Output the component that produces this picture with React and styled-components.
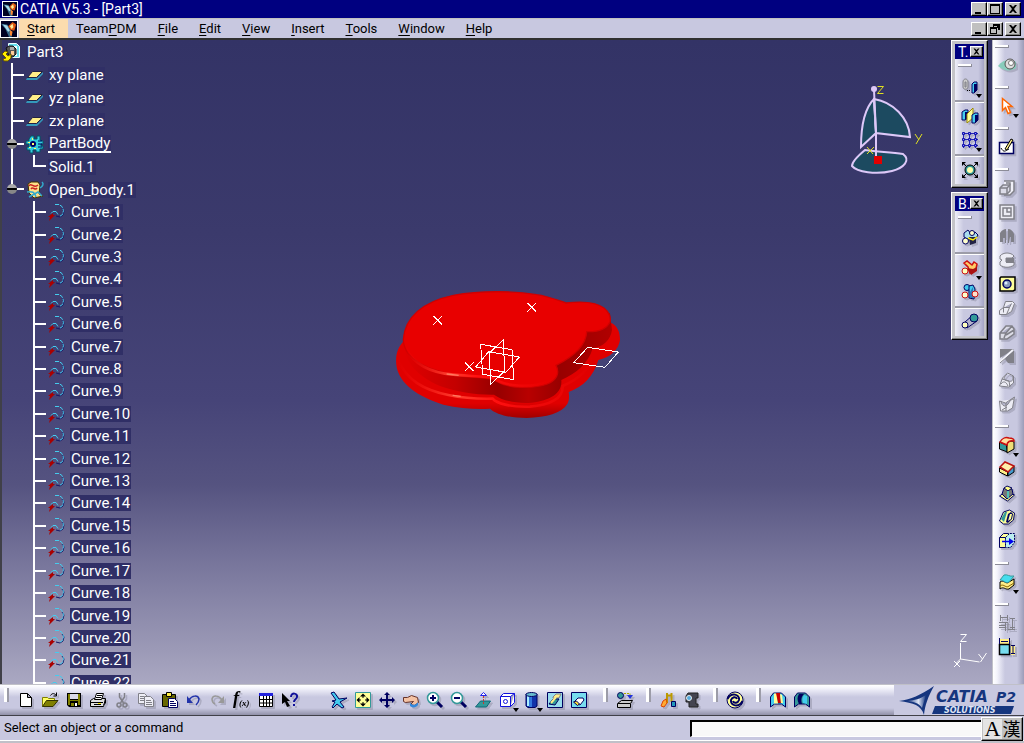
import React from "react";
import styled, { createGlobalStyle, css } from "styled-components";

const NAVY = "#000060";
const YELLOW = "#ffee88";
const CYAN = "#44ccee";
const TEAL = "#339999";
const GREY = "#808088";

// 18x18 toolbar drawings
const icons = {
  new: <path d="M3.5 2.5h7l4 4v9h-11zM10.5 2.5v4h4" fill="#fff" stroke="#000" />,
  open: (
    <>
      <path d="M1.5 15.5v-9h5l1 1h6v2" fill="#ffff66" stroke="#808000" />
      <path d="M1.5 15.5l4-6h11.5l-5 6z" fill="#808000" stroke="#333300" />
      <path d="M9.5 4.5c2-3 4-2 6 0M15.5 1.5v3.5h-3" fill="none" stroke="#000" />
    </>
  ),
  save: (
    <>
      <path d="M2 2h14v14H4l-2-2z" fill="#000" />
      <path d="M3 3h2v11H3zM13 3h2v11h-2zM5 9h8v1H5z" fill="#808000" />
      <path d="M5 3h8v5H5z" fill="#d8d8e8" />
      <path d="M6 12h3v3H6z" fill="#808000" />
      <path d="M10 12h2v3h-2z" fill="#fff" />
    </>
  ),
  print: (
    <>
      <path d="M1.5 9.5l3-2h12l-2 8h-13z" fill="#e0e0e0" stroke="#000" />
      <path d="M5.5 8.5l2-6h7l-2 6z" fill="#fff" stroke="#000" />
      <path d="M8 4.5h5M7 6.5h5M2 11.5h12M5 13.5h7M16.5 8v4l-2 2" stroke="#000" fill="none" />
      <path d="M9 12h3v1H9z" fill="#ffee00" />
    </>
  ),
  cut: (
    <>
      <path d="M6.5 2v4l4 6M11.5 2v4l-4 6" fill="none" stroke={GREY} strokeWidth="1.5" />
      <circle cx="6" cy="14" r="2" fill="none" stroke={GREY} strokeWidth="1.5" />
      <circle cx="12" cy="14" r="2" fill="none" stroke={GREY} strokeWidth="1.5" />
    </>
  ),
  copy: (
    <g fill="#eeeef6" stroke={GREY}>
      <path d="M1.5 2.5h6l3 3v7h-9z" />
      <path d="M3 5.5h4M3 7.5h4M3 9.5h4" />
      <path d="M7.5 5.5h6l3 3v7h-9z" />
      <path d="M9 9.5h5M9 11.5h6M9 13.5h6" />
    </g>
  ),
  paste: (
    <>
      <path d="M1.5 3.5h13v12h-13z" fill="#666600" stroke="#000" />
      <path d="M5.5 1.5h5v4h-5z" fill="#ffee44" stroke="#000" />
      <path d="M7.5 7.5h6l3 3v6h-9z" fill="#fff" stroke={NAVY} />
      <path d="M9 10.5h4M9 12.5h6M9 14.5h6" stroke={NAVY} />
    </>
  ),
  undo: (
    <>
      <path d="M4 9c3-5 9-5 10-1 0 3-2 5-3 6" fill="none" stroke="#2233aa" strokeWidth="1.5" />
      <path d="M2 5v7h6z" fill="#2233aa" />
    </>
  ),
  redo: (
    <>
      <path d="M13 9c-3-5-9-5-10-1 0 3 1 4 3 5" fill="none" stroke="#999" strokeWidth="1.5" />
      <path d="M15 5v7H9z" fill="#999" />
    </>
  ),
  formula: (
    <text x="0" y="13" fontFamily="Liberation Serif, serif" fontStyle="italic" fontWeight="bold" fontSize="18">
      f<tspan fontSize="9" dy="2">(x)</tspan>
    </text>
  ),
  table: (
    <>
      <path d="M2.5 2.5h13v13h-13zM2 8.5h13M2 12h13M6.5 5v10M9.5 5v10M12.5 5v10" fill="#fff" stroke="#000" />
      <path d="M2 2h14v3H2z" fill="#2222dd" />
    </>
  ),
  whatsThis: (
    <>
      <path d="M1 2l8 8H6l3 5-3 1-2-5-3 2z" fill="#000" />
      <path d="M10 6c0-5 7-4 6 0 0 2-3 2-3 5M13 13v2" fill="none" stroke="#111199" strokeWidth="2" />
    </>
  ),
  fly: (
    <path d="M1 2l3-1 5 7 8-1-7 4 4 5-2 1-5-4-4 4-1-1 3-5-3-1 4-1z" fill={CYAN} stroke={NAVY} />
  ),
  fit: (
    <>
      <path d="M1.5 1.5h15v15h-15z" fill="#ffff99" stroke={TEAL} />
      <path d="M9 2.5l3 3H6zM9 15.5l3-3H6zM2.5 9l3-3v6zM15.5 9l-3-3v6z" fill="#000" />
      <path d="M9 5v2M9 11v2M5 9h2M11 9h2" stroke="#000" />
    </>
  ),
  pan: (
    <>
      <path d="M9 3v12M3 9h12" stroke={NAVY} strokeWidth="2" />
      <path d="M9 1l3 3H6zM9 17l3-3H6zM1 9l3-3v6zM17 9l-3-3v6z" fill={NAVY} />
    </>
  ),
  rotate: (
    <>
      <path d="M1.5 6.5h4l4-2 6 2 1 5-4 3-4-1 3-3-8 1-2-1z" fill="#f4c2a4" stroke="#66332a" />
      <path d="M8 12c3 3 6 2 8-1v3c-2 3-6 3-8 1z" fill="#3388dd" />
    </>
  ),
  zoomIn: (
    <>
      <path d="M11 11l5 5" stroke={NAVY} strokeWidth="3" />
      <circle cx="7" cy="7" r="5.5" fill="#fff" stroke={TEAL} strokeWidth="1.5" />
      <path d="M4 7h6M7 4v6" stroke={NAVY} strokeWidth="2" />
    </>
  ),
  zoomOut: (
    <>
      <path d="M11 11l5 5" stroke={NAVY} strokeWidth="3" />
      <circle cx="7" cy="7" r="5.5" fill="#fff" stroke={TEAL} strokeWidth="1.5" />
      <path d="M4 7h6" stroke={NAVY} strokeWidth="2" />
    </>
  ),
  normal: (
    <>
      <path d="M1.5 16l5-6h10l-4 6z" fill={TEAL} stroke="#116677" />
      <path d="M9.5 5v8" stroke="#cc3333" strokeDasharray="2 1" />
      <path d="M9.5 1.5l3 3h-6z" fill="#fff" stroke="#2222ee" />
    </>
  ),
  iso: (
    <g fill="#fff" stroke="#1111dd">
      <path d="M2.5 5.5h10v10h-10zM2.5 5.5l3-3h11l-4 3M16.5 2.5v9l-4 4" />
      <circle cx="7.5" cy="10.5" r="2" />
    </g>
  ),
  shading: (
    <>
      <path d="M4 3h11v12l-2 1.5H6L4 15z" fill="#1133aa" stroke={NAVY} />
      <path d="M5 4h2v11H5z" fill="#aaeeff" />
      <path d="M7 4h3v12H7z" fill="#3377dd" />
      <ellipse cx="9.5" cy="3.5" rx="5.5" ry="2" fill="#66bbcc" stroke={NAVY} />
    </>
  ),
  hide: (
    <>
      <path d="M1.5 1.5h15v15h-15z" fill="#99ddee" stroke={NAVY} />
      <path d="M7 6l3-3h5l-2 4H7z" fill={YELLOW} stroke={GREY} />
      <path d="M3 13l4-5h6l-4 6z" fill={TEAL} stroke={NAVY} />
      <path d="M5 12l5-6" stroke={YELLOW} strokeWidth="2" />
    </>
  ),
  swap: (
    <>
      <path d="M1.5 1.5h15v15h-15z" fill="#77ddee" stroke={NAVY} />
      <path d="M4 11l4-4h5l1 2-4 5z" fill="#fff" stroke={NAVY} />
      <path d="M3.5 11l3-1 3 3-2 1.5z" fill="#ffdd33" stroke={NAVY} />
    </>
  ),
  material: (
    <>
      <circle cx="4.5" cy="4.5" r="3" fill={TEAL} stroke={NAVY} />
      <path d="M8 2.5h6v3" fill="none" stroke="#aaaa00" strokeDasharray="2 1" />
      <path d="M11 4h6l-3 4z" fill="#2233dd" />
      <path d="M1.5 12.5l4-3h11l-2 3v4h-13zM2 12.5h12" fill="#ccc" stroke="#000" />
    </>
  ),
  measure: (
    <>
      <path d="M8 2v10M8 4.5h4M12.5 2v9" stroke="#bb9900" strokeWidth="2" />
      <path d="M2 15l2-5 3-2 1 4-3 4z" fill="#ffaa33" stroke="#dd4400" />
      <path d="M12.5 10.5h4v5h-4z" fill="#2299bb" stroke={NAVY} />
    </>
  ),
  camera: (
    <>
      <path d="M5 2h10v5h-2v6h2v3H6v-5H3V5z" fill="#444450" stroke="#222" />
      <circle cx="6" cy="7" r="2.5" fill="#55aadd" stroke="#eee" />
    </>
  ),
  update: (
    <>
      <circle cx="9" cy="9" r="8" fill="#ffff99" stroke={NAVY} />
      <path d="M1.500 8C5 1 14 3 13 9c-1 3-5 4-6 1" fill="none" stroke={NAVY} strokeWidth="2" />
      <path d="M16.500 10C13 17 4 15 5 9c1-3 5-4 6-1" fill="none" stroke={NAVY} strokeWidth="2" />
    </>
  ),
  draftAnalysis: (
    <>
      <path d="M1.5 6l3-4h8l4 4v10l-4-3h-7l-4 3z" fill={CYAN} stroke={NAVY} />
      <path d="M5 2.500h3l1 10H5z" fill="#ffff99" />
      <path d="M7 2h4l1 10H9z" fill="#cc0000" />
      <path d="M11 3l2 1 1 8h-2z" fill="#ffff99" />
    </>
  ),
  curvature: (
    <>
      <path d="M1.5 6l3-4h8l4 4v10l-4-3h-7l-4 3z" fill={TEAL} stroke={NAVY} />
      <path d="M6 3h5c-3 3-3 6-2 10H6C4 9 4 6 6 3z" fill={NAVY} />
      <path d="M11 4l3 1v8l-4-1c-1-3-1-5 1-8z" fill={CYAN} />
    </>
  ),
  eye: (
    <>
      <path d="M0 10c5-7 13-8 18-4v6c-6 4-12 3-18-2z" fill="#88ccbb" />
      <circle cx="12" cy="8" r="5" fill="#ddd" stroke="#555" />
      <circle cx="13" cy="7" r="2.5" fill="#fff" stroke="#777" />
    </>
  ),
  select: <path d="M4.5 1.5v12l3-3 2.5 6 2.5-1-2.5-6h4z" fill="#fff" stroke="#ff6600" strokeWidth="1.5" />,
  sketch: (
    <>
      <path d="M1.5 4.5h14v11h-14z" fill="#fff" stroke={NAVY} strokeWidth="1.5" />
      <path d="M3 10c3 5 4 3 8 1" stroke="#000" fill="none" />
      <path d="M7 11l6-10 2 1-6 10z" fill={YELLOW} stroke="#000" />
    </>
  ),
  pad: (
    <g stroke={GREY} strokeWidth="1.5">
      <path d="M6 2h10v10l-4 4H6" fill="#f0f0f8" />
      <path d="M2 9l3-3h7v6l-3 3H2z" fill="#dcdce8" />
      <path d="M2 9h7v6M9 9l3-3M12 6V4H8" fill="none" />
    </g>
  ),
  pocket: <path d="M2 2h14v14H2zM5 5h8v8H5zM9 5v4h4" fill="#ececf4" stroke={GREY} strokeWidth="1.5" />,
  shaft: <path d="M8 2v14H7v-5H5v4H2V6c2-3 4-4 6-4zM10 2c3 0 5 2 6 5v8h-3v-5h-1l-1 6h-1z" fill={GREY} />,
  groove: (
    <>
      <path d="M2 5c3-4 11-4 14 0l-2 2H8v4h8v3c-4 3-10 3-14 0v-3l2-2-2-1z" fill="#ececf4" stroke={GREY} />
      <path d="M8 7h8v5H8z" fill={GREY} />
    </>
  ),
  hole: (
    <>
      <path d="M2 3l1-1h14v13l-2 1H2z" fill="#ffff99" stroke="#000" strokeWidth="1.5" />
      <circle cx="9" cy="9" r="4" fill="#8899bb" stroke={NAVY} strokeWidth="1.5" />
      <circle cx="8" cy="8" r="1.5" fill="#ddeeff" />
    </>
  ),
  rib: <path d="M1.5 11.5l4-3 2-6h7l2 2-3 8-5 3h-7zM5.5 8.500h6l2-4M5.5 8.500v5M11.5 8.500l-3 7" fill="#ececf4" stroke={GREY} />,
  slot: <path d="M2 10l6-7h6l2 3v5l-7 5H2zM2 10h6l6-7M8 10l-2 5M8 12l8-5" fill="#dcdce6" stroke={GREY} strokeWidth="1.5" />,
  stiffener: (
    <>
      <path d="M2 2h14L2 11z" fill={GREY} />
      <path d="M16 3v13h-6l-3-4z" fill={GREY} />
      <path d="M2 15L15 3" stroke="#f4f4fa" strokeWidth="2" />
      <path d="M2 16L16 4" stroke={GREY} />
    </>
  ),
  loft: <path d="M1.5 15l3-8 5-5 6 3v7l-5 4zM4 8l7 2 1 6M9 3c-4 4-4 6 1 7s5-1 5-5M3 13c2-3 5-3 7 2" fill="#ececf4" stroke={GREY} />,
  loftRemove: <path d="M1.5 6l6 2 9-6-2 11-5 3h-7zM3 6c1 6 5 6 7 3s3-5 6-5M8 8v8M4 15l5-3" fill="#ececf4" stroke={GREY} />,
  fillet: (
    <>
      <path d="M1.5 6l7 3 1 7-8-3z" fill={TEAL} stroke="#000" />
      <path d="M9 10c0-4 3-6 7-4v7l-7 4z" fill="#eedd77" stroke="#000" />
      <path d="M2 6c2-4 6-5 9-4 3 0 5 1 5 3-4-1-7 1-7 4z" fill="#ffe0a0" stroke="#cc1111" strokeWidth="1.5" />
    </>
  ),
  chamfer: (
    <>
      <path d="M1.5 8l8 4v4l-8-4z" fill={YELLOW} stroke="#000" />
      <path d="M10 12l6-6v6l-6 4z" fill="#4499cc" stroke="#000" />
      <path d="M2 7l5-5 9 4-6 6z" fill="#ffeeaa" stroke="#bb1111" strokeWidth="1.5" />
    </>
  ),
  draft: (
    <>
      <path d="M1.5 12l7-5 8 4-7 6z" fill="#ffff88" stroke={NAVY} />
      <path d="M4 10l2-6 8 1 1 5-6 5z" fill="#777" stroke={NAVY} />
      <path d="M6 4l3-2 5 2-4 3z" fill="#ffff88" stroke={NAVY} />
      <path d="M10 7v7" stroke="#44ddcc" strokeWidth="1.5" />
    </>
  ),
  shell: (
    <>
      <path d="M1.5 13l4-9 6-2 5 3-1 7-5 4h-5z" fill="#ffff99" stroke={NAVY} />
      <path d="M3 11l4-7h2L6 14z" fill={TEAL} />
      <path d="M8 14l2-8 3-2 2 2-1 5-4 4z" fill={NAVY} />
      <path d="M10 13l2-7h2l-1 5z" fill="#ffff99" />
    </>
  ),
  thickness: (
    <>
      <path d="M1.5 5.5h6v10h-6zM1.5 5.5l4-4h5v4" fill="#ffff99" stroke={NAVY} />
      <path d="M7.5 5.5l4-4h5v9l-4 5h-5z" fill="#bbeeee" stroke={NAVY} strokeDasharray="2 1" />
      <path d="M4 9.5h8" stroke="#0000ee" strokeWidth="1.5" />
      <path d="M11 6l5 3.5-5 3.5z" fill="#0000ee" />
    </>
  ),
  surface: (
    <>
      <path d="M2 9c4-3 6 3 9 0l5-3v6l-5 4c-4 1-5-3-9 0z" fill={YELLOW} stroke="#000" />
      <path d="M2 13c4-3 6 3 9 0l5-3" fill="none" stroke="#886600" />
      <path d="M2 7l4-5c4-1 5 2 10 1l-5 6c-4 2-5-2-9-2z" fill="#44ddee" stroke={TEAL} />
    </>
  ),
  constraintOff: <path d="M2.5 1v6M9.5 1v6M2 3.5h7M1 8.5h9v8M1 11.5h6M1 13.5h6M7.5 9v8M10 15.5h7M14.5 5v10M12 4.5h5M12 13.5h5" fill="none" stroke={GREY} />,
  constraint: (
    <>
      <path d="M1 1h11v5H1zM13 7h4v10h-4z" fill={YELLOW} />
      <path d="M1.5 6.5h10v10h-10z" fill="#77ddee" stroke="#000" strokeWidth="1.5" />
      <path d="M1.5 0v6M11.5 0v6M3 3.5h7M13 7.5h4M13 15.5h4M15 8v7" stroke={NAVY} />
    </>
  ),
  translate: (
    <>
      <path d="M2 5c0-4 5-4 5 0v5c0 3-5 3-5 0zM4 5h1v5H4z" fill="#ccc" stroke={GREY} />
      <path d="M11 7l2-2h3v8l-3 3h-2z" fill={CYAN} stroke={NAVY} />
      <path d="M13 7h3v6l-3 3z" fill={NAVY} />
      <path d="M6 13.5h4" stroke="#000" strokeDasharray="1 1" />
    </>
  ),
  symmetry: (
    <>
      <path d="M1 5l3-2h3v8l-3 2H1z" fill={CYAN} stroke={NAVY} />
      <path d="M4 5h3v6l-3 2z" fill={NAVY} />
      <path d="M6 16V7l6-6v10z" fill="#ffff99" stroke="#998800" />
      <path d="M11 8l3-2h3v7l-3 3h-3z" fill={CYAN} stroke={NAVY} />
      <path d="M14 8h3v5l-3 3z" fill={NAVY} />
    </>
  ),
  pattern: (
    <>
      <path d="M1 2.5h16M1 8.5h16M1 14.5h16M2.5 1v16M8.5 1v16M14.5 1v16" stroke="#2222bb" />
      <path d="M1.5 1.5h2v2h-2zM7.5 1.5h2v2h-2zM13.5 1.5h2v2h-2zM1.5 7.5h2v2h-2zM7.5 7.5h2v2h-2zM13.5 7.5h2v2h-2zM1.5 13.5h2v2h-2zM7.5 13.5h2v2h-2zM13.5 13.5h2v2h-2z" fill="#88f" stroke="#1111aa" />
    </>
  ),
  scaling: (
    <>
      <path d="M2 2l4 4M16 2l-4 4M2 16l4-4M16 16l-4-4" stroke="#000" />
      <path d="M1 1h4L1 5zM17 1h-4l4 4zM1 17h4l-4-4zM17 17h-4l4-4z" fill="#000" />
      <circle cx="9" cy="9" r="5" fill={TEAL} stroke="#000" />
      <circle cx="9" cy="9" r="3" fill="#ffffaa" />
    </>
  ),
  assemble: (
    <>
      <path d="M3 4l4-3 3 4 4-2 3 3-2 3-7 2-5-3z" fill="#aaddee" stroke={NAVY} />
      <circle cx="11" cy="4" r="2.500" fill="#ffffcc" stroke={NAVY} />
      <path d="M8 8h7v6l-6 2z" fill="#222244" />
      <path d="M7 9l5 2 4-3" stroke="#ffee00" strokeWidth="1.5" fill="none" />
      <circle cx="4.500" cy="12" r="3" fill="#ffffcc" stroke={NAVY} />
    </>
  ),
  add: (
    <>
      <path d="M3 4l3-2 5 4 2-3 3 2-1 5-6 4-2-6z" fill="#ffcc66" stroke="#cc1111" strokeWidth="1.5" />
      <path d="M6 9l6 1 4-2v4l-6 4z" fill="#aa1111" />
      <circle cx="4" cy="12" r="3" fill="#ffffbb" stroke="#cc1111" />
    </>
  ),
  remove: (
    <>
      <circle cx="6" cy="4.5" r="3" fill={CYAN} stroke={NAVY} />
      <path d="M8 3l4-1 2 4-1 10-5-1z" fill={CYAN} stroke={NAVY} />
      <path d="M9 9l3-5v11H9z" fill="#3377bb" />
      <circle cx="4" cy="12" r="3" fill="#ffffcc" stroke="#cc1111" />
      <circle cx="14" cy="11" r="3" fill="#ffe0cc" stroke="#cc1111" />
    </>
  ),
  trim: (
    <>
      <path d="M4 9l8-7 4 6-10 7z" fill="#b4b4cc" stroke={NAVY} />
      <circle cx="13" cy="5" r="4" fill={TEAL} stroke={NAVY} />
      <circle cx="4" cy="12" r="3" fill="#ffffbb" stroke={NAVY} />
    </>
  ),
  plane: (
    <>
      <path d="M0 14l1-2h10l6-6v2l-6 6z" fill="#3399bb" />
      <path d="M1.5 11.5l5-6h10l-6 6z" fill={YELLOW} stroke="#222244" />
    </>
  ),
  body: (
    <>
      <path d="M5 1h3v3h3V1h3v4l3 1v3h-2v2h2v3h-3v3h-4v-2H7v3H4v-3H1v-3h2V9H0V6h3V4z" fill="#33ccdd" stroke="#005566" />
      <circle cx="7" cy="9" r="3" fill={NAVY} />
      <path d="M6 3h1v2H6zM2 7h2v1H2zM6 8h2v2H6zM3 12h2v1H3zM8 13h2v1H8z" fill="#ffff66" />
      <path d="M12 6h4M12 9h4M12 12h4" stroke={NAVY} />
    </>
  ),
  openBody: (
    <>
      <path d="M2 3l3-2h7l2 3-1 9 4 2-9 2-5-5z" fill="#ffe08a" stroke="#443300" />
      <path d="M3 5c2-4 5 3 9-1M5 8c2-3 4 2 6-1" fill="none" stroke="#cc2222" strokeWidth="1.5" />
      <path d="M1 11c5-1 8 0 9 5M3 16l9-5 4 4M16 1c2 2 1 4-2 6" fill="none" stroke="#33aacc" strokeWidth="1.5" />
    </>
  ),
  curve: (
    <>
      <path d="M14 5l2 3-1 4-3 2-4-1" fill="none" stroke="#181866" />
      <path d="M7 1.5h4l3 2 1.5 4-1 4-3 2" fill="none" stroke={CYAN} strokeDasharray="4 1" />
      <path d="M3 10.5l2-2h3l2 3" fill="none" stroke={CYAN} />
      <path d="M0 14l5-4v2h2l-2 2-4 4 1-4z" fill="#aa0000" />
    </>
  ),
  part: (
    <>
      <path d="M6.5 0.5h8l3 3v11h-7l-4-7z" fill="#66ddee" stroke="#eeffff" />
      <path d="M9 3h6v10h-4z" fill="#eeffff" />
      <path d="M4 5l3-2h4l3 3v5l-3 3-4-1z" fill="#555" stroke="#111" />
      <path d="M8 4h4v3H8z" fill="#aaa" />
      <path d="M9 8h3v4H9z" fill="#ffcc99" />
      <path d="M0 11l3-3 3 1-2 2 2 2 3-2v4l-3 3H2l-1-2 3-1z" fill="#ffee00" stroke="#665500" />
    </>
  ),
  app: (
    <>
      <path d="M0 0h18v18H0z" fill="#000022" />
      <path d="M0 3l7 1 5 8v6H9L5 9z" fill="#336688" />
      <path d="M2 4l5 1 3 6-2 1z" fill="#aaddee" />
      <path d="M8 6l5-5 4 3-2 7-4-1z" fill="#dd5511" />
      <path d="M10 6l3-3 1 4-2 2z" fill="#ffee99" />
      <path d="M10 10l3 2-1 5-2-1z" fill="#ff8833" />
    </>
  ),
};

const Icon = ({ name, size = 18 }) => (
  <svg width={size} height={size} viewBox="0 0 18 18" aria-hidden="true">
    {icons[name]}
  </svg>
);

const menus = [
  ["", "S", "tart"],
  ["Team", "P", "DM"],
  ["", "F", "ile"],
  ["", "E", "dit"],
  ["", "V", "iew"],
  ["", "I", "nsert"],
  ["", "T", "ools"],
  ["", "W", "indow"],
  ["", "H", "elp"],
];

const curves = Array.from({ length: 22 }, (_, i) => `Curve.${i + 1}`);

const bottomTools = [
  { gap: 14 },
  ..."new open save print cut copy paste undo redo formula table whatsThis".split(" ").map((icon) => ({ icon })),
  { gap: 25, plain: true },
  ..."fly fit pan rotate zoomIn zoomOut normal".split(" ").map((icon) => ({ icon })),
  { icon: "iso", drop: true },
  { icon: "shading", drop: true },
  { icon: "hide" },
  { icon: "swap" },
  { gap: 22 },
  { icon: "material" },
  { gap: 19 },
  { icon: "measure" },
  { icon: "camera" },
  { gap: 19 },
  { icon: "update" },
  { gap: 19 },
  { icon: "draftAnalysis" },
  { icon: "curvature" },
];

const sideGroups = [
  [{ icon: "eye" }],
  [{ icon: "select", drop: true }],
  [{ icon: "sketch" }],
  "pad pocket shaft groove hole rib slot stiffener loft loftRemove".split(" ").map((icon) => ({ icon })),
  [
    { icon: "fillet", drop: true },
    { icon: "chamfer" },
    { icon: "draft" },
    { icon: "shell" },
    { icon: "thickness" },
  ],
  [{ icon: "surface", drop: true }],
  [{ icon: "constraintOff" }, { icon: "constraint" }],
];

const palettes = [
  {
    title: "T.",
    groups: [
      [{ icon: "translate", drop: true }],
      [{ icon: "symmetry" }, { icon: "pattern", drop: true }],
      [{ icon: "scaling" }],
    ],
  },
  {
    title: "B.",
    groups: [
      [{ icon: "assemble" }],
      [{ icon: "add", drop: true }, { icon: "remove" }],
      [{ icon: "trim" }],
    ],
  },
];

const Tool = ({ icon, drop }) => (
  <ToolButton type="button" aria-label={icon} $drop={drop}>
    <Icon name={icon} />
  </ToolButton>
);

const glyphs = {
  minimize: <path d="M2 9h6v2H2z" />,
  maximize: <path d="M1 1h10v10H1zM2 3v7h8V3z" fillRule="evenodd" />,
  restore: <path d="M4 1h7v6H9V5H8V3H5v1H4zM1 4h7v7H1zM2 6v4h5V6z" fillRule="evenodd" />,
  close: <path d="M2 2h2l2 2 2-2h2L7 6l3 4H8L6 8l-2 2H2l3-4z" />,
};

const Glyph = ({ name, size = 12 }) => (
  <svg width={size} height={size} viewBox="0 0 12 12" aria-hidden="true">
    {glyphs[name]}
  </svg>
);

const WindowControls = ({ middle }) => (
  <Controls>
    <ControlButton type="button" aria-label="Minimize"><Glyph name="minimize" /></ControlButton>
    <ControlButton type="button" aria-label={middle}><Glyph name={middle} /></ControlButton>
    <ControlButton type="button" aria-label="Close" $apart><Glyph name="close" /></ControlButton>
  </Controls>
);

const Model = () => (
  <ModelSvg viewBox="0 0 780 450" role="img" aria-label="Solid part">
    <defs>
      <linearGradient id="flange" x1="0" y1="0" x2="0" y2="1">
        <stop offset="0.4" stopColor="#e00000" />
        <stop offset="0.85" stopColor="#e00000" />
        <stop offset="1" stopColor="#a00000" />
      </linearGradient>
      <linearGradient id="wall" x1="0" y1="0" x2="1" y2="0">
        <stop offset="0" stopColor="#e00000" />
        <stop offset="0.25" stopColor="#c40000" />
        <stop offset="0.45" stopColor="#960000" />
        <stop offset="0.6" stopColor="#b80000" />
        <stop offset="0.75" stopColor="#980000" />
        <stop offset="1" stopColor="#b00000" />
      </linearGradient>
      <linearGradient id="shine" x1="0" y1="0" x2="1" y2="0">
        <stop offset="0" stopColor="#ff1010" stopOpacity="0" />
        <stop offset="0.3" stopColor="#ff4030" />
        <stop offset="0.5" stopColor="#ff1010" />
        <stop offset="1" stopColor="#ff1010" stopOpacity="0" />
      </linearGradient>
    </defs>
    <path d="M72 182C50 205 45 230 50 262C60 310 110 350 190 374C240 386 290 388 330 386C350 404 390 414 440 414C500 412 545 400 562 372C568 360 568 350 566 336C610 320 640 290 655 240C690 232 716 210 720 180C720 155 712 140 696 130L600 120Z" fill="url(#flange)" />
    <path d="M54 240C80 300 130 330 205 345C250 354 300 357 338 356C350 370 390 382 450 380C510 376 550 355 548 318C590 300 630 270 640 225" fill="none" stroke="url(#shine)" strokeWidth="8" />
    <path d="M70 180C70 240 105 285 180 318C230 336 290 345 342 344C365 360 400 370 445 369C500 365 548 345 544 300C590 280 625 250 638 205C670 200 692 180 696 150L690 100Z" fill="url(#wall)" />
    <path d="M70 178C75 110 130 65 220 46C300 32 400 32 470 44C505 49 530 60 558 69C600 64 645 64 672 84C686 95 693 112 690 125C680 148 655 156 620 155C618 200 570 235 528 256C540 280 530 300 502 312C465 326 390 328 350 304C335 294 320 294 300 293C210 290 120 265 84 220C74 206 70 195 70 178Z" fill="#e80000" stroke="#d00000" strokeWidth="4" />
    <path d="M78 205C100 250 150 278 220 284C260 288 300 287 340 294C370 318 450 328 505 304" fill="none" stroke="url(#shine)" strokeWidth="8" />
    <path d="M200 282l36 4M218 346l24 3" stroke="#ff7a60" strokeWidth="4" />
    <g fill="none" stroke="#fff" strokeWidth="3" shapeRendering="crispEdges">
      <path d="M160 108l26 26M186 108l-26 26M442 69l26 26M468 69l-26 26M255 247l26 26M281 247l-26 26" />
      <path d="M302 193l94 16 5 90-93-16z" />
      <path d="M371 179l2 95-41 39-4-94z" />
      <path d="M326 215l92 16-40 46-91-16z" />
      <path d="M623 202l92 14-40 46-94-14z" />
    </g>
  </ModelSvg>
);

const Compass = () => (
  <CompassSvg viewBox="0 0 76 96" role="img" aria-label="Compass">
    <g fill="#1c4a60" stroke="#ddc8f8" strokeWidth="2">
      <path d="M25 14C15 24 12 42 12 62L27 48Z" />
      <path d="M25 14C44 17 60 33 61 52L27 48Z" />
      <path d="M16 65C30 67 42 67 54 69C62 75 55 83 43 86C27 90 8 87 3 81C3 76 10 70 16 65Z" />
      <path d="M25 5L27 48V72" />
    </g>
    <circle cx="25" cy="4" r="3" fill="#ddc8f8" />
    <path d="M25 71h8v8h-8z" fill="#e00000" />
    <path d="M28.5 1.5h6l-6 7h6M66 49l4 6M73 49l-6 10M18 62l6 7M25 62l-7 7" fill="none" stroke="#e0e020" />
  </CompassSvg>
);

const Axis = () => (
  <AxisSvg viewBox="0 0 36 36" aria-hidden="true">
    <path d="M8.5 1.5h6l-6 7h6M8.5 10v16l-4 4M8.5 26l19 3M26.5 21l4 5M34.5 20l-6 9M2 28l6 6M8 28l-6 6" fill="none" stroke="#fff" />
  </AxisSvg>
);

const App = () => {
  return (
    <Window>
      <GlobalStyle />
      <TitleBar>
        <AppMark><Icon name="app" size={14} /></AppMark>
        <Title>CATIA V5.3 - [Part3]</Title>
        <WindowControls middle="maximize" />
      </TitleBar>
      <MenuBar>
        <AppMark><Icon name="app" size={16} /></AppMark>
        {menus.map(([before, key, after], i) => (
          <MenuItem type="button" key={before + key + after} $active={i === 0}>
            {before}<u>{key}</u>{after}
          </MenuItem>
        ))}
        <WindowControls middle="restore" />
      </MenuBar>

      <Body>
        <Viewport>
          <Tree>
            <RootNode>
              <Icon name="part" />
              <Label>Part3</Label>
            </RootNode>
            {["xy plane", "yz plane", "zx plane"].map((name) => (
              <Node key={name}>
                <Branch />
                <Icon name="plane" />
                <Label>{name}</Label>
              </Node>
            ))}
            <Node>
              <Branch><Knob /></Branch>
              <Icon name="body" />
              <Label $active>PartBody</Label>
            </Node>
            <Node>
              <Trunk />
              <Branch $nested $last />
              <Label $close>Solid.1</Label>
            </Node>
            <Node>
              <Branch $last><Knob $last /></Branch>
              <Icon name="openBody" />
              <Label>Open_body.1</Label>
            </Node>
            <Curves>
              {curves.map((name) => (
                <Curve key={name}>
                  <Branch />
                  <Icon name="curve" />
                  <Label>{name}</Label>
                </Curve>
              ))}
            </Curves>
          </Tree>
          <Model />
          <Compass />
          <Axis />
          <Palettes>
            {palettes.map(({ title, groups }) => (
              <Palette key={title}>
                <PaletteTitle>
                  {title}
                  <PaletteClose type="button" aria-label="Close"><Glyph name="close" size={9} /></PaletteClose>
                </PaletteTitle>
                <PaletteBody>
                  <Dash />
                  {groups.map((group, i) => (
                    <PaletteGroup key={i}>
                      {group.map((tool) => <Tool key={tool.icon} {...tool} />)}
                    </PaletteGroup>
                  ))}
                </PaletteBody>
              </Palette>
            ))}
          </Palettes>
        </Viewport>
        <SideBar>
          {sideGroups.map((group, i) => (
            <SideGroup key={i}>
              <Dash />
              {group.map((tool) => <Tool key={tool.icon} {...tool} />)}
            </SideGroup>
          ))}
        </SideBar>
      </Body>

      <BottomBar>
        {bottomTools.map((tool, i) =>
          tool.icon ? <Tool key={i} {...tool} /> : <Grip key={i} $width={tool.gap} $plain={tool.plain} />
        )}
        <Logo viewBox="0 0 130 30" role="img" aria-label="CATIA P2 Solutions">
          <defs>
            <linearGradient id="star" x1="0" y1="0" x2="1" y2="0">
              <stop offset="0" stopColor="#15357e" />
              <stop offset="0.6" stopColor="#dfe6f6" />
              <stop offset="1" stopColor="#15357e" />
            </linearGradient>
          </defs>
          <path d="M5 16C18 14 25 11 40 1C34 12 31 20 30 30C27 20 20 18 5 16Z" fill="#15357e" />
          <path d="M13 16C21 15 26 14 32 10L28 23C25 18 20 17 13 16Z" fill="url(#star)" />
          <path d="M41 21h79l-3 8H38z" fill="#15357e" />
          <g fontFamily="DejaVu Sans, sans-serif" fontStyle="italic" fontWeight="bold">
            <text x="42" y="17" fontSize="16" fill="#15357e">CATIA</text>
            <text x="102" y="17" fontSize="14" fill="#15357e">P2</text>
            <text x="50" y="28" fontSize="8" fill="#dfe4f4">SOLUTIONS</text>
          </g>
        </Logo>
      </BottomBar>

      <StatusBar>
        <Message>Select an object or a command</Message>
        <CommandInput type="text" aria-label="Command" />
        <ImeBox>
          <ImeLatin>A</ImeLatin>
          <ImeHanja>漢</ImeHanja>
        </ImeBox>
      </StatusBar>
    </Window>
  );
};

export default App;

// Styled Components
const GlobalStyle = createGlobalStyle`
  * {
    box-sizing: border-box;
  }

  body {
    margin: 0;
    overflow: hidden;
    font-family: Roboto, "Liberation Sans", sans-serif;
    font-size: 14px;
  }

  button {
    font: inherit;
    border: none;
    padding: 0;
    background: none;
    color: inherit;
  }

  svg {
    display: block;
    flex: none;
    overflow: visible;
  }
`;

const raised = css`
  border: 1px solid;
  border-color: #fff #000 #000 #fff;
  box-shadow: inset -1px -1px 0 #808080;
`;

const Window = styled.div`
  display: flex;
  flex-direction: column;
  height: 100vh;
  background: #c8c8e0;
`;

const TitleBar = styled.header`
  display: flex;
  align-items: center;
  height: 18px;
  padding: 0 3px 0 2px;
  background: #000080;
  color: #fff;
`;

const Title = styled.span`
  padding-left: 2px;
  line-height: 16px;
`;

const AppMark = styled.span`
  display: block;
  border: 1px solid #fff;
`;

const Controls = styled.div`
  display: flex;
  margin-left: auto;
`;

const ControlButton = styled.button`
  ${raised}
  display: flex;
  align-items: center;
  justify-content: center;
  width: 16px;
  height: 14px;
  margin-left: ${({ $apart }) => ($apart ? 2 : 0)}px;
  background: #c0c0c0;
`;

const MenuBar = styled.nav`
  display: flex;
  align-items: center;
  height: 22px;
  padding-right: 3px;
  border-top: 1px solid #c0c0c0;
  border-bottom: 2px solid #303030;
  background: #c8c8e0;
  font-size: 13px;

  ${AppMark} {
    margin-right: 1px;
  }
`;

const MenuItem = styled.button`
  height: 19px;
  padding: 0 13px 0 8px;
  line-height: 19px;
  background: ${({ $active }) => ($active ? "#fbdcae" : "none")};

  u {
    text-underline-offset: 2px;
  }
`;

const Body = styled.main`
  display: flex;
  flex: 1;
  min-height: 0;
`;

const Viewport = styled.section`
  position: relative;
  flex: 1;
  overflow: hidden;
  border-left: 2px solid #404048;
  background: linear-gradient(
    #333366 0%,
    #3b3a6c 30%,
    #464478 56%,
    #555380 69%,
    #77759b 81%,
    #9795b3 93%,
    #aaa8c2 100%
  );
`;

const Tree = styled.ul`
  margin: 0;
  padding: 0;
  list-style: none;
  color: #fff;
  font-size: 15px;
`;

const Node = styled.li`
  display: flex;
  align-items: center;
  height: 23px;
  padding-left: 9px;
`;

const RootNode = styled(Node)`
  padding-left: 0;

  span {
    margin-left: 6px;
  }
`;

const Label = styled.span`
  margin-left: ${({ $close }) => ($close ? 0 : 4)}px;
  padding: 0 1px;
  line-height: 16px;
  background: #302f66;
  border-bottom: ${({ $active }) => ($active ? "2px solid #fff" : "none")};
`;

const Branch = styled.span`
  position: relative;
  display: flex;
  align-items: ${({ $last }) => ($last ? "flex-end" : "center")};
  align-self: ${({ $last }) => ($last ? "flex-start" : "stretch")};
  height: ${({ $last }) => ($last ? "12px" : "auto")};
  width: 13px;
  margin-left: ${({ $nested }) => ($nested ? 20 : 0)}px;
  margin-right: 2px;
  border-left: 2px solid #fff;

  &::before {
    content: "";
    width: 100%;
    height: 2px;
    background: #fff;
  }
`;

const Trunk = styled.span`
  align-self: stretch;
  width: 2px;
  background: #fff;
`;

const Knob = styled.span`
  position: absolute;
  left: -6px;
  width: 10px;
  height: 10px;
  margin-bottom: ${({ $last }) => ($last ? -4 : 0)}px;
  border-radius: 50%;
  background: linear-gradient(#aaa 4px, #000 4px, #000 6px, #888 6px);
`;

const Curves = styled.ul`
  display: flex;
  flex-direction: column;
  height: 493px;
  margin: 0;
  padding: 0 0 0 31px;
  list-style: none;
`;

const Curve = styled.li`
  display: flex;
  flex: 1;
  min-height: 0;
  align-items: center;
`;

const ModelSvg = styled.svg`
  position: absolute;
  left: calc(50% - 117px);
  top: calc(50% - 82px);
  width: 260px;
`;

const CompassSvg = styled.svg`
  position: absolute;
  right: 67px;
  top: 45px;
  width: 76px;
`;

const AxisSvg = styled.svg`
  position: absolute;
  right: 4px;
  bottom: 15px;
  width: 36px;
`;

const Palettes = styled.div`
  position: absolute;
  top: 0;
  right: 4px;
  display: flex;
  flex-direction: column;
  gap: 4px;
`;

const Palette = styled.div`
  ${raised}
  width: 37px;
  padding: 3px;
  background: #c4c4c8;
`;

const PaletteTitle = styled.div`
  display: flex;
  align-items: center;
  justify-content: space-between;
  height: 15px;
  padding: 0 1px 0 3px;
  background: #000080;
  color: #fff;
`;

const PaletteClose = styled.button`
  ${raised}
  display: flex;
  align-items: center;
  justify-content: center;
  width: 13px;
  height: 11px;
  background: #c0c0c0;
  color: #000;
`;

const PaletteBody = styled.div`
  padding-top: 5px;
  background: linear-gradient(90deg, #eeeef8, #c8c8e0 30%, #c8c8e0 80%, #a4a4c4);
`;

const PaletteGroup = styled.div`
  display: flex;
  flex-direction: column;
  align-items: center;
  padding: 2px 0;

  & + & {
    border-top: 2px solid #9c9ca8;
    box-shadow: inset 0 1px 0 #fff;
  }
`;

const Dash = styled.div`
  width: 14px;
  height: 3px;
  margin: 0 0 5px 3px;
  background: #fff;
  border: solid #8c8c98;
  border-width: 0 1px 1px 0;
`;

const ToolButton = styled.button`
  position: relative;
  display: flex;
  flex: none;
  align-items: center;
  justify-content: center;
  width: 24px;
  height: 24px;

  svg {
    filter: drop-shadow(2px 2px 0 rgba(130, 130, 150, 0.4));
  }

  ${({ $drop }) =>
    $drop &&
    css`
      &::after {
        content: "";
        position: absolute;
        right: 0;
        bottom: 0;
        border: 3px solid transparent;
        border-top: 4px solid #000;
        border-bottom: none;
      }
    `}
`;

const SideBar = styled.aside`
  width: 32px;
  padding: 5px 4px 0 0;
  border-left: 1px solid #c0c0c8;
  background: linear-gradient(90deg, #fff 0, #f4f4fc 4px, #c8c8e0 12px, #c8c8e0 24px, #9c9cb8 100%);
`;

const SideGroup = styled.div`
  display: flex;
  flex-direction: column;
  align-items: center;
  padding-bottom: 9px;

  ${Dash} {
    align-self: flex-start;
    margin-left: 2px;
  }
`;

const BottomBar = styled.div`
  display: flex;
  align-items: center;
  height: 32px;
  border-top: 1px solid #c0c0c8;
  border-bottom: 1px solid #404048;
  background: linear-gradient(#fff 0, #f4f4fc 3px, #c8c8e0 12px, #c8c8e0 23px, #9090a8 30px);
`;

const Grip = styled.span`
  display: flex;
  justify-content: flex-end;
  width: ${({ $width }) => $width}px;
  height: 24px;
  padding-right: 5px;

  &::before {
    content: "";
    display: ${({ $plain }) => ($plain ? "none" : "block")};
    width: 3px;
    height: 14px;
    background: #fff;
    border-right: 2px solid #9c9ca8;
  }
`;

const Logo = styled.svg`
  width: 130px;
  height: 30px;
  margin-left: auto;
  background: #c8c8e0;
`;

const StatusBar = styled.footer`
  display: flex;
  height: 27px;
  padding: 1px 1px 2px 4px;
  background: linear-gradient(#c8c8e0 24px, #fff 24px, #fff 25px, #c0c0c8 25px);
`;

const Message = styled.span`
  flex: 1;
  font-size: 13px;
  line-height: 22px;
`;

const CommandInput = styled.input`
  width: 291px;
  height: 17px;
  margin-top: 3px;
  border: 1px solid #808080;
  border-width: 2px 0 1px 2px;
  border-color: #000 #fff #fff #000;
  background: #f8f8f8;
`;

const ImeBox = styled.div`
  ${raised}
  display: flex;
  width: 42px;
  height: 24px;
  padding: 1px;
  background: #c0c0c0;
  line-height: 20px;
`;

const ImeLatin = styled.span`
  width: 19px;
  background: #e4e4e4;
  font: 22px/20px "Liberation Serif", serif;
  text-align: center;
`;

const ImeHanja = styled.span`
  flex: 1;
  font: 18px/18px "Noto Sans CJK KR", sans-serif;
  text-align: center;
`;
